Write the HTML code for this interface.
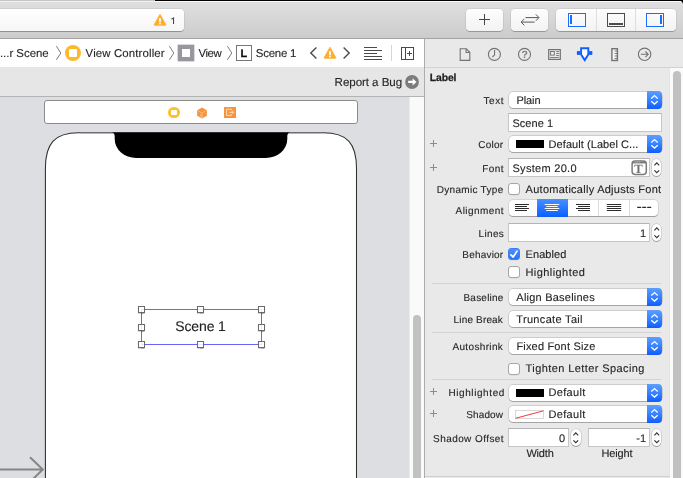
<!DOCTYPE html>
<html>
<head>
<meta charset="utf-8">
<title>Xcode</title>
<style>
html,body{margin:0;padding:0;}
body{width:683px;height:478px;overflow:hidden;background:#ececec;font-family:"Liberation Sans",sans-serif;color:#262626;-webkit-text-stroke:0.12px;text-rendering:geometricPrecision;}
#root{position:relative;width:683px;height:478px;overflow:hidden;background:#ececec;will-change:transform;}
.abs{position:absolute;}
.t{position:absolute;white-space:nowrap;line-height:14px;font-size:11px;color:#262626;}
.lbl{position:absolute;white-space:nowrap;line-height:14px;font-size:10px;color:#262626;text-align:right;right:179.5px;}
/* toolbar */
#toolbar{left:0;top:0;width:683px;height:38px;background:linear-gradient(#e0e0e0,#cccccc);}
#tbline{left:0;top:38px;width:683px;height:1px;background:#a4a4a4;}
.tbtn{position:absolute;top:9px;height:22px;background:linear-gradient(#fdfdfd,#f3f3f3);border-radius:4px;box-shadow:0 0 0 0.5px rgba(0,0,0,0.12),0 1px 0.5px rgba(0,0,0,0.22);}
/* popups */
.pop{position:absolute;left:508.7px;width:153px;height:16px;border-radius:4px;background:#fff;box-shadow:0 0 0 0.5px rgba(0,0,0,0.24),0 0.8px 0.6px rgba(0,0,0,0.26);}
.pop .cap{position:absolute;right:-0.5px;top:-0.9px;width:15px;height:17.6px;border-radius:0 4px 4px 0;background:linear-gradient(#5c9dff,#3b86ff 45%,#0f5dff);}
.pop .cap svg{position:absolute;left:0;top:0;}
.pop .tx{position:absolute;left:7.8px;top:0.8px;font-size:11px;line-height:14px;white-space:nowrap;color:#262626;}
/*vshift*/.t,.lbl,.pop .tx{margin-top:0.6px;}
.fld{position:absolute;background:#fff;border:1px solid #c6c6c6;border-top-color:#b4b4b4;box-sizing:border-box;}
.stp{position:absolute;width:9.6px;background:#fff;border-radius:5.5px;box-shadow:0 0 0 0.5px rgba(0,0,0,0.2),0 1px 0.5px rgba(0,0,0,0.25);}
.cb{position:absolute;left:508px;width:12px;height:12px;box-sizing:border-box;border:1px solid #a6a6a6;border-radius:3px;background:#fff;box-shadow:0 0.5px 0.5px rgba(0,0,0,0.08);}
.sep{position:absolute;left:432px;width:229px;height:1px;background:#d4d4d4;}
.plus{position:absolute;left:430px;width:7px;height:7px;}
.plus:before{content:"";position:absolute;left:0;top:3px;width:7px;height:1px;background:#8c8c8c;}
.plus:after{content:"";position:absolute;left:3px;top:0;width:1px;height:7px;background:#8c8c8c;}
</style>
<style id="fit">
#x1{letter-spacing:-0.002px;margin-left:-1.10px}
#x2{letter-spacing:0.141px;margin-left:0.10px}
#x3{letter-spacing:-0.452px;margin-left:0.10px}
#x5{letter-spacing:-0.210px;margin-left:-0.70px}
#x6{letter-spacing:-0.070px;margin-left:0.10px}
#x7{letter-spacing:-0.148px;margin-left:-0.70px}
#x8{letter-spacing:-0.088px;margin-left:0.20px}
#x9{letter-spacing:0.613px;margin-right:-0.70px}
#x10{letter-spacing:-0.061px;margin-left:-0.08px}
#x11{letter-spacing:0.059px;margin-left:-0.10px}
#x12{letter-spacing:0.258px;margin-right:0.10px}
#x13{letter-spacing:0.061px;margin-left:0.12px}
#x14{letter-spacing:0.456px;margin-right:-0.54px}
#x15{letter-spacing:0.288px;margin-left:0.00px}
#x16{letter-spacing:0.301px;margin-right:0.00px}
#x17{letter-spacing:0.262px;margin-left:0.10px}
#x18{letter-spacing:0.439px;margin-right:-0.52px}
#x19{letter-spacing:0.348px;margin-right:-0.66px}
#x21{letter-spacing:0.195px;margin-right:0.17px}
#x22{letter-spacing:0.058px;margin-left:0.10px}
#x23{letter-spacing:0.428px;margin-left:0.00px}
#x24{letter-spacing:0.215px;margin-right:-0.08px}
#x25{letter-spacing:0.228px;margin-left:-0.18px}
#x26{letter-spacing:0.155px;margin-right:0.54px}
#x27{letter-spacing:0.323px;margin-left:-0.18px}
#x28{letter-spacing:0.350px;margin-right:0.33px}
#x29{letter-spacing:0.178px;margin-left:-0.08px}
#x30{letter-spacing:0.407px;margin-left:0.10px}
#x31{letter-spacing:0.593px;margin-right:-1.46px}
#x32{letter-spacing:0.301px;margin-left:0.12px}
#x33{letter-spacing:0.137px;margin-right:0.33px}
#x34{letter-spacing:0.301px;margin-left:0.12px}
#x35{letter-spacing:0.422px;margin-right:-0.51px}
#x38{letter-spacing:-0.175px;margin-left:0.02px}
#x39{letter-spacing:-0.128px;margin-left:0.02px}
</style>
<style id="vfix">
#x8{margin-top:1.1px !important}
#x10{margin-top:1.1px !important}
#x15{margin-top:1.1px !important}
#x20{margin-top:1.1px !important}
#x24{margin-top:1.1px !important}
#x25{margin-top:1.1px !important}
#x26{margin-top:1.1px !important}
#x33{margin-top:1.1px !important}
#x34{margin-top:1.1px !important}
#x36{margin-top:1.1px !important}
#x37{margin-top:1.1px !important}
#x7{margin-top:-1.0px !important}
</style>
</head>
<body>
<div id="root">

<!-- ================= TOOLBAR ================= -->
<div id="toolbar" class="abs"></div>
<div class="abs" style="left:0;top:0;width:155px;height:1px;background:#c7c7c7;"></div><div class="abs" style="left:0;top:1px;width:155px;height:1px;background:#f2f2f2;"></div>
<div class="abs" style="left:155px;top:0;width:528px;height:1px;background:#000;"></div>
<div class="abs" style="left:155px;top:1px;width:528px;height:1px;background:#fbfbfb;"></div>
<div id="tbline" class="abs"></div>

<!-- activity field -->
<div class="abs" style="left:-10px;top:9px;width:194px;height:22px;border-radius:4px;background:linear-gradient(#ffffff,#f6f6f6);box-shadow:0 0 0 0.5px rgba(0,0,0,0.12),0 1px 0.5px rgba(0,0,0,0.25);"></div>
<svg class="abs" style="left:153px;top:13px;" width="14" height="13" viewBox="0 0 14 13"><path d="M7 1.2 L12.8 11.6 Q13 12.3 12.3 12.3 L1.7 12.3 Q1 12.3 1.2 11.6 Z" fill="#fdae2c" stroke="#fdae2c" stroke-width="0.8" stroke-linejoin="round"/><rect x="6.1" y="4.9" width="1.8" height="4.3" rx="0.7" fill="#fff"/><circle cx="7" cy="10.5" r="0.95" fill="#fff"/></svg>
<svg class="abs" style="left:169px;top:15px;" width="8" height="11" viewBox="0 0 8 11"><path d="M2.5 4.2 L4.55 2.9 V9" fill="none" stroke="#474747" stroke-width="1.05" stroke-linejoin="miter"/></svg>

<!-- toolbar buttons -->
<div class="tbtn" style="left:466px;width:37px;"></div>
<div class="abs" style="left:479px;top:19px;width:11px;height:1px;background:#464646;"></div>
<div class="abs" style="left:484px;top:14px;width:1px;height:11px;background:#464646;"></div>
<div class="tbtn" style="left:511px;width:37px;"></div>
<svg class="abs" style="left:519px;top:12px;" width="22" height="15" viewBox="0 0 22 15"><g fill="none" stroke="#585858" stroke-width="1" stroke-linecap="butt" stroke-linejoin="miter"><path d="M6.5 5.6 H19.6 M16.8 2.4 L20 5.6 L16.8 8.8"/><path d="M15.6 10.1 H2.5 M5.3 6.9 L2.1 10.1 L5.3 13.3"/></g></svg>
<div class="tbtn" style="left:556px;width:120px;"></div>
<div class="abs" style="left:596px;top:9px;width:1px;height:22px;background:#dedede;"></div>
<div class="abs" style="left:635px;top:9px;width:1px;height:22px;background:#dedede;"></div>
<div class="abs" style="left:568px;top:13px;width:18px;height:13.5px;box-sizing:border-box;border:1px solid #1a6dff;"></div>
<div class="abs" style="left:570.2px;top:15.2px;width:1.6px;height:9.2px;background:#1a6dff;"></div>
<div class="abs" style="left:607px;top:13px;width:18px;height:13.5px;box-sizing:border-box;border:1px solid #4c4c4c;"></div>
<div class="abs" style="left:609px;top:23px;width:14px;height:1.6px;background:#4c4c4c;"></div>
<div class="abs" style="left:646px;top:13px;width:18px;height:13.5px;box-sizing:border-box;border:1px solid #1a6dff;"></div>
<div class="abs" style="left:660.2px;top:15.2px;width:1.6px;height:9.2px;background:#1a6dff;"></div>
<!-- window corner -->
<svg class="abs" style="left:678px;top:0;" width="5" height="5" viewBox="0 0 5 5"><path d="M0 0 H5 V4.2 A4 4 0 0 0 1.2 0.7 H0 Z" fill="#000"/></svg>

<!-- ================= JUMP BAR ================= -->
<div class="abs" style="left:0;top:39px;width:424px;height:28px;background:#fff;"></div>
<div class="abs" style="left:0;top:67px;width:424px;height:29px;background:#e6e6e6;"></div>
<div class="abs" style="left:0;top:96px;width:424px;height:1px;background:#b3b3b3;"></div>

<div id="x1" class="t" style="left:1px;top:46px;font-size:11.4px;">...r Scene</div>
<svg class="abs" style="left:55px;top:45px;" width="8" height="16" viewBox="0 0 8 16"><path d="M1.4 1.2 L5.8 8 L1.4 14.8" fill="none" stroke="#7e7e7e" stroke-width="1"/></svg>
<div class="abs" style="left:65px;top:45px;width:16px;height:16px;border-radius:8px;background:#fdb92c;"></div>
<div class="abs" style="left:68.9px;top:48.9px;width:8.2px;height:8.2px;border-radius:0.9px;background:#fff;"></div>
<div id="x2" class="t" style="left:85.5px;top:46px;font-size:11.4px;">View Controller</div>
<svg class="abs" style="left:168px;top:45px;" width="8" height="16" viewBox="0 0 8 16"><path d="M1.4 1.2 L5.8 8 L1.4 14.8" fill="none" stroke="#7e7e7e" stroke-width="1"/></svg>
<div class="abs" style="left:178.1px;top:45.2px;width:15.8px;height:15.6px;background:#98979d;box-shadow:0 0 0 0.3px #85848b;"></div><div class="abs" style="left:181.6px;top:48.8px;width:8.8px;height:8.3px;background:#fff;"></div>
<div id="x3" class="t" style="left:198.5px;top:46px;font-size:11.4px;">View</div>
<svg class="abs" style="left:226px;top:45px;" width="8" height="16" viewBox="0 0 8 16"><path d="M1.4 1.2 L5.8 8 L1.4 14.8" fill="none" stroke="#7e7e7e" stroke-width="1"/></svg>
<div class="abs" style="left:236px;top:45px;width:16px;height:16px;box-sizing:border-box;background:#fff;border:1px solid #777;"></div>
<div id="x4" class="t" style="left:240.6px;top:46px;font-size:11px;font-weight:bold;color:#111;-webkit-text-stroke:0.3px;">L</div>
<div id="x5" class="t" style="left:256.5px;top:46px;font-size:11.4px;">Scene 1</div>
<svg class="abs" style="left:309px;top:46px;" width="9" height="14" viewBox="0 0 9 14"><path d="M7.4 1.5 L1.8 7 L7.4 12.5" fill="none" stroke="#4a4a4a" stroke-width="1.4"/></svg>
<svg class="abs" style="left:323px;top:46px;" width="14" height="13" viewBox="0 0 14 13"><path d="M7 1.2 L12.8 11.6 Q13 12.3 12.3 12.3 L1.7 12.3 Q1 12.3 1.2 11.6 Z" fill="#fdae2c" stroke="#fdae2c" stroke-width="0.8" stroke-linejoin="round"/><rect x="6.1" y="4.9" width="1.8" height="4.3" rx="0.7" fill="#fff"/><circle cx="7" cy="10.5" r="0.95" fill="#fff"/></svg>
<svg class="abs" style="left:342px;top:46px;" width="9" height="14" viewBox="0 0 9 14"><path d="M1.6 1.5 L7.2 7 L1.6 12.5" fill="none" stroke="#4a4a4a" stroke-width="1.4"/></svg>
<!-- lines icon -->
<div class="abs" style="left:364px;top:47px;width:13px;height:1px;background:#4a4a4a;"></div>
<div class="abs" style="left:364px;top:50px;width:18px;height:1px;background:#4a4a4a;"></div>
<div class="abs" style="left:364px;top:53px;width:13px;height:1px;background:#4a4a4a;"></div>
<div class="abs" style="left:364px;top:56px;width:18px;height:1px;background:#4a4a4a;"></div>
<div class="abs" style="left:364px;top:59px;width:18px;height:1px;background:#4a4a4a;"></div>
<div class="abs" style="left:391px;top:45px;width:1px;height:16px;background:#d6d6d6;"></div>
<!-- add editor icon -->
<div class="abs" style="left:401px;top:47px;width:13px;height:12.5px;box-sizing:border-box;border:1px solid #4a4a4a;"></div>
<div class="abs" style="left:405px;top:47px;width:1px;height:12.5px;background:#4a4a4a;"></div>
<div class="abs" style="left:407px;top:53px;width:5px;height:1px;background:#4a4a4a;"></div>
<div class="abs" style="left:409px;top:51px;width:1px;height:5px;background:#4a4a4a;"></div>

<!-- Report a bug -->
<div id="x6" class="t" style="left:334.5px;top:75px;font-size:11.6px;">Report a Bug</div>
<svg class="abs" style="left:404px;top:74px;" width="16" height="16" viewBox="404 74 16 16"><circle cx="412" cy="82" r="6.9" fill="#7c7c7c"/><path d="M408.2 80.7 H412.6 V78.2 L416.5 81.9 L412.6 85.6 V83.1 H408.2 Z" fill="#fff"/></svg>

<!-- ================= CANVAS ================= -->
<div class="abs" style="left:0;top:97px;width:409px;height:381px;background:#dddee1;"></div>
<div class="abs" style="left:409px;top:97px;width:15px;height:381px;background:#fafafa;border-left:1px solid #ebebec;box-sizing:border-box;"></div>
<div class="abs" style="left:413px;top:315px;width:8px;height:200px;border-radius:4px;background:#c1c1c1;"></div>
<div class="abs" style="left:424px;top:39px;width:1px;height:439px;background:#adadad;"></div>

<!-- scene dock -->
<div class="abs" style="left:44px;top:100px;width:314px;height:24px;box-sizing:border-box;border:1px solid #8b8b8b;border-radius:3px;background:#fff;"></div>
<div class="abs" style="left:168.1px;top:106.9px;width:12px;height:11.6px;border-radius:6px;background:#fdc12f;"></div>
<div class="abs" style="left:170.8px;top:110.3px;width:6.5px;height:4.9px;border-radius:1px;background:#fff;"></div>
<svg class="abs" style="left:196px;top:107px;" width="12" height="12" viewBox="0 0 12 12"><path d="M6 0.6 L10.9 3.3 V8.7 L6 11.4 L1.1 8.7 V3.3 Z" fill="#f6953f"/><path d="M1.6 3.6 L6 6 L10.4 3.6 M6 6 V11" fill="none" stroke="#fbc394" stroke-width="0.7"/><text x="3.9" y="9.4" font-family="Liberation Sans" font-size="3.6" fill="#fde0c6" transform="skewY(28) translate(0,-2.2)">1</text></svg>
<div class="abs" style="left:223.9px;top:107.2px;width:11.9px;height:10.7px;background:#f6953f;"></div>
<svg class="abs" style="left:224px;top:107.2px;" width="12" height="11" viewBox="0 0 12 11"><path d="M7.4 3.4 V2.2 H2.6 V8.4 H7.4 V7.2" fill="none" stroke="#fde3cb" stroke-width="0.9"/><path d="M5 5.3 H9.6 M8.2 3.9 L9.7 5.3 L8.2 6.7" fill="none" stroke="#fde3cb" stroke-width="0.9"/></svg>

<!-- device -->
<svg class="abs" style="left:0;top:120px;" width="410" height="358" viewBox="0 120 410 358">
<path d="M45.4 490 V168.4 C45.4 143.6 54.3 132.8 78.9 132.8 H323 C347.6 132.8 356.5 143.6 356.5 168.4 V490 Z" fill="#fff" stroke="#2e2e2e" stroke-width="1.05"/>
<path d="M111.8 132.5 Q114.7 132.8 114.7 136.5 V139 A21.5 19 0 0 0 136.2 158 H265.8 A21.5 19 0 0 0 287.3 139 V136.5 Q287.3 132.8 290.2 132.5 Z" fill="#000"/>
<path d="M80 132.8 H112 M290 132.8 H322" stroke="#777" stroke-width="1.05"/>
</svg>
<!-- label selection -->
<div class="abs" style="left:141px;top:308.6px;width:120.6px;height:36.2px;box-sizing:border-box;border:1.25px solid #6666fb;"></div>
<div id="x7" class="t" style="left:176px;top:317px;font-size:14px;line-height:20px;color:#222;">Scene 1</div>
<!-- handles injected below -->
<div class="abs h" style="left:138.2px;top:306px;"></div>
<div class="abs h" style="left:197.3px;top:306px;"></div>
<div class="abs h" style="left:257.7px;top:306px;"></div>
<div class="abs h" style="left:138.2px;top:323.7px;"></div>
<div class="abs h" style="left:257.7px;top:323.7px;"></div>
<div class="abs h" style="left:138.2px;top:341px;"></div>
<div class="abs h" style="left:197.3px;top:341px;"></div>
<div class="abs h" style="left:257.7px;top:341px;"></div>
<style>.h{width:7px;height:7px;box-sizing:border-box;border:1px solid #6a6a6a;background:rgba(255,255,255,0.85);box-shadow:0 0.5px 1px rgba(0,0,0,0.3);}</style>

<!-- entry arrow -->
<svg class="abs" style="left:0;top:450px;" width="50" height="28" viewBox="0 0 50 28"><path d="M-2 19.5 H42.5 M30 7.2 L42.8 19.5 L33 29" fill="none" stroke="#868686" stroke-width="2"/></svg>

<!-- ================= INSPECTOR ================= -->
<div class="abs" style="left:425px;top:39px;width:258px;height:439px;background:#e9e9e9;"></div>
<div class="abs" style="left:425px;top:67px;width:258px;height:1px;background:#d2d2d2;"></div>
<div class="abs" style="left:669px;top:68px;width:14px;height:410px;background:#fafafa;border-left:1px solid #e4e4e4;box-sizing:border-box;"></div>
<div class="abs" style="left:673px;top:71px;width:8px;height:440px;border-radius:4px;background:#c1c1c1;"></div>
<div class="abs" style="left:425px;top:476px;width:245px;height:1px;background:#cfcfcf;"></div>

<!--INSP-START-->
<!-- inspector tab icons -->
<svg class="abs" style="left:456px;top:44px;" width="200" height="22" viewBox="0 0 200 22">
 <g fill="none" stroke="#737373" stroke-width="1.1">
  <!-- file -->
  <path d="M4.2 4.8 H10.3 L13.8 8.3 V16.4 H4.2 Z"/><path d="M10.1 4.8 V8.5 H13.8"/>
  <!-- clock -->
  <circle cx="38.4" cy="10.4" r="6"/><path d="M38.6 6 V10.8 L36.4 13"/>
  <!-- help -->
  <circle cx="68.5" cy="10.4" r="6"/>
  <!-- id card -->
  <rect x="92.7" y="5.6" width="11.6" height="9.8" stroke-width="1.2"/>
  <rect x="94.6" y="7.5" width="3.7" height="3.6" stroke-width="1" fill="#f4f4f4"/>
  <path d="M100.2 7.5 H102.9 M100.2 9.5 H102.9 M100.2 11.5 H102.9 M94.1 13.5 H102.9" stroke-width="0.9"/>
  <!-- ruler -->
  <rect x="155.9" y="4.7" width="5.5" height="11.8" stroke-width="1.4" fill="#f6f6f6"/>
  <path d="M158.6 7 H161.4 M158.6 9.5 H161.4 M158.6 12 H161.4 M158.6 14.5 H161.4" stroke-width="0.95"/>
  <!-- arrow circle -->
  <circle cx="188.6" cy="10.3" r="6.2"/><path d="M184.8 10.3 H192 M189.4 7.5 L192.2 10.3 L189.4 13.1"/>
 </g>
 <text x="65.45" y="14.2" font-family="Liberation Sans" font-size="10.5" font-weight="bold" fill="#7a7a7a">?</text>
 <!-- attributes -->
 <path d="M125.1 4.2 H132.3 V10.4 L128.7 16.1 L125.1 10.4 Z" fill="#fff" stroke="#0f5fff" stroke-width="1.9" stroke-linejoin="miter"/>
 <rect x="120.9" y="7.1" width="3.4" height="3.8" fill="#0f5fff"/><rect x="133.1" y="7.1" width="3.2" height="3.8" fill="#0f5fff"/>
</svg>

<div id="x8" class="t" style="left:429.5px;top:70.8px;font-weight:bold;font-size:10.4px;color:#1e1e1e;-webkit-text-stroke:0.25px;">Label</div>

<!-- Text -->
<div id="x9" class="lbl" style="top:93.95px;">Text</div>
<div class="pop" style="top:92.1px;"><span id="x10" class="tx">Plain</span><span class="cap"><svg width="15" height="17" viewBox="0 0 15 17"><path d="M4.3 7.5 L7.5 4.6 L10.7 7.5 M4.3 10.2 L7.5 13.1 L10.7 10.2" fill="none" stroke="#fff" stroke-width="1.3"/></svg></span></div>
<div class="fld" style="left:508px;top:113px;width:154px;height:19px;"></div>
<div id="x11" class="t" style="left:512.5px;top:116px;">Scene 1</div>

<!-- Color -->
<div class="plus" style="top:140px;"></div>
<div id="x12" class="lbl" style="top:137.95px;">Color</div>
<div class="pop" style="top:136.2px;"><span class="abs" style="left:7.3px;top:3.9px;width:28px;height:7.7px;background:#000;"></span><span id="x13" class="tx" style="left:39.8px;">Default (Label C...</span><span class="cap"><svg width="15" height="17" viewBox="0 0 15 17"><path d="M4.3 7.5 L7.5 4.6 L10.7 7.5 M4.3 10.2 L7.5 13.1 L10.7 10.2" fill="none" stroke="#fff" stroke-width="1.3"/></svg></span></div>

<!-- Font -->
<div class="plus" style="top:164px;"></div>
<div id="x14" class="lbl" style="top:161.95px;">Font</div>
<div class="fld" style="left:508px;top:158px;width:142px;height:18.5px;"></div>
<div id="x15" class="t" style="left:512.5px;top:160.5px;">System 20.0</div>
<svg class="abs" style="left:630px;top:159px;" width="18" height="17" viewBox="0 0 18 17"><rect x="2.1" y="2" width="14.2" height="13.4" rx="2.8" fill="#fff" stroke="#7a7a7a" stroke-width="1.5"/><path d="M2.4 3.5 H16" stroke="#7a7a7a" stroke-width="1.9"/><path d="M4.6 3.1 h1 M6.6 3.1 h1 M8.6 3.1 h1" stroke="#e8e8e8" stroke-width="0.7"/><text x="4.3" y="14" font-family="Liberation Serif" font-weight="bold" font-size="12.6" fill="#6f6f6f">T</text></svg>
<div class="stp" style="left:651.8px;top:158.5px;height:17.5px;"><svg class="abs" style="left:0;top:0" width="9.6" height="17.5" viewBox="0 0 9.6 17.5"><path d="M2.4 6.3 L4.8 3.9 L7.2 6.3 M2.4 11.3 L4.8 13.7 L7.2 11.3" fill="none" stroke="#333" stroke-width="1.15"/></svg></div>

<!-- Dynamic Type -->
<div id="x16" class="lbl" style="top:182.95px;">Dynamic Type</div>
<div class="cb" style="top:183px;"></div>
<div id="x17" class="t" style="left:525.5px;top:182px;">Automatically Adjusts Font</div>

<!-- Alignment -->
<div id="x18" class="lbl" style="top:203.95px;">Alignment</div>
<div class="abs" style="left:508.7px;top:199.8px;width:149.4px;height:16.4px;border-radius:4px;background:#fff;box-shadow:0 0 0 0.5px rgba(0,0,0,0.18),0 1px 0.5px rgba(0,0,0,0.25);"></div>
<div class="abs" style="left:537px;top:199.3px;width:31px;height:17.4px;background:linear-gradient(#4690ff,#0b5fff);"></div>
<div class="abs" style="left:598.3px;top:199.8px;width:1px;height:16.4px;background:#dcdcdc;"></div>
<div class="abs" style="left:629.2px;top:199.8px;width:1px;height:16.4px;background:#dcdcdc;"></div>
<svg class="abs" style="left:508px;top:198.9px;" width="152" height="18" viewBox="0 0 152 18">
 <g stroke="#2b2b2b" stroke-width="1">
  <path d="M7 5.5 H21 M7 7.5 H19 M7 9.5 H21 M7 11.5 H19"/>
  <path d="M68 5.5 H82 M70 7.5 H82 M68 9.5 H82 M70 11.5 H82"/>
  <path d="M98.8 5.5 H113.2 M98.8 7.5 H113.2 M98.8 9.5 H113.2 M98.8 11.5 H113.2"/>
  <path d="M129.2 8.4 H133.2 M134.2 8.4 H138.2 M139.2 8.4 H143.2" stroke-width="1.1"/>
 </g>
 <g stroke="#fff" stroke-width="1"><path d="M36.7 5.5 H51.3 M38.2 7.5 H49.8 M36.7 9.5 H51.3 M38.2 11.5 H49.8"/></g>
</svg>

<!-- Lines -->
<div id="x19" class="lbl" style="top:227.1px;">Lines</div>
<div class="fld" style="left:508px;top:223px;width:142px;height:18.5px;"></div>
<div id="x20" class="t" style="left:600px;width:46px;text-align:right;top:225.7px;">1</div>
<div class="stp" style="left:651.8px;top:223.8px;height:17.5px;"><svg class="abs" style="left:0;top:0" width="9.6" height="17.5" viewBox="0 0 9.6 17.5"><path d="M2.4 6.3 L4.8 3.9 L7.2 6.3 M2.4 11.3 L4.8 13.7 L7.2 11.3" fill="none" stroke="#333" stroke-width="1.15"/></svg></div>

<!-- Behavior -->
<div id="x21" class="lbl" style="top:247.95px;">Behavior</div>
<div class="cb" style="top:248px;background:linear-gradient(#4a90ff,#2a76f2);border-color:#3a80f3;"><svg class="abs" style="left:-1px;top:-1px" width="12" height="12" viewBox="0 0 12 12"><path d="M2.9 6.9 L5.2 9 L9 3.1" fill="none" stroke="#fff" stroke-width="1.7" stroke-linecap="round" stroke-linejoin="round"/></svg></div>
<div id="x22" class="t" style="left:525.5px;top:247px;">Enabled</div>
<div class="cb" style="top:266px;"></div>
<div id="x23" class="t" style="left:525.5px;top:265px;">Highlighted</div>
<div class="sep" style="top:283px;"></div>

<!-- Baseline -->
<div id="x24" class="lbl" style="top:290.75px;">Baseline</div>
<div class="pop" style="top:289px;"><span id="x25" class="tx">Align Baselines</span><span class="cap"><svg width="15" height="17" viewBox="0 0 15 17"><path d="M4.3 7.5 L7.5 4.6 L10.7 7.5 M4.3 10.2 L7.5 13.1 L10.7 10.2" fill="none" stroke="#fff" stroke-width="1.3"/></svg></span></div>
<div id="x26" class="lbl" style="top:312.75px;">Line Break</div>
<div class="pop" style="top:311.3px;"><span id="x27" class="tx">Truncate Tail</span><span class="cap"><svg width="15" height="17" viewBox="0 0 15 17"><path d="M4.3 7.5 L7.5 4.6 L10.7 7.5 M4.3 10.2 L7.5 13.1 L10.7 10.2" fill="none" stroke="#fff" stroke-width="1.3"/></svg></span></div>
<div class="sep" style="top:332px;"></div>
<div id="x28" class="lbl" style="top:339.95px;">Autoshrink</div>
<div class="pop" style="top:338.2px;"><span id="x29" class="tx">Fixed Font Size</span><span class="cap"><svg width="15" height="17" viewBox="0 0 15 17"><path d="M4.3 7.5 L7.5 4.6 L10.7 7.5 M4.3 10.2 L7.5 13.1 L10.7 10.2" fill="none" stroke="#fff" stroke-width="1.3"/></svg></span></div>
<div class="cb" style="top:362.7px;"></div>
<div id="x30" class="t" style="left:525.5px;top:361px;">Tighten Letter Spacing</div>
<div class="sep" style="top:379px;"></div>

<!-- Highlighted color -->
<div class="plus" style="top:388px;"></div>
<div id="x31" class="lbl" style="top:386.05px;">Highlighted</div>
<div class="pop" style="top:385px;"><span class="abs" style="left:7.3px;top:3.9px;width:28px;height:7.7px;background:#000;"></span><span id="x32" class="tx" style="left:39.8px;top:0.1px;">Default</span><span class="cap"><svg width="15" height="17" viewBox="0 0 15 17"><path d="M4.3 7.5 L7.5 4.6 L10.7 7.5 M4.3 10.2 L7.5 13.1 L10.7 10.2" fill="none" stroke="#fff" stroke-width="1.3"/></svg></span></div>
<div class="plus" style="top:410px;"></div>
<div id="x33" class="lbl" style="top:407.75px;">Shadow</div>
<div class="pop" style="top:406.1px;"><svg class="abs" style="left:6.8px;top:3.5px;" width="29" height="9" viewBox="0 0 29 9"><rect x="0.5" y="0.5" width="28" height="8" fill="#fff" stroke="#d0d0d0" stroke-width="0.8"/><path d="M0.5 8.3 L28.5 0.8" stroke="#f23b3b" stroke-width="1"/></svg><span id="x34" class="tx" style="left:39.8px;">Default</span><span class="cap"><svg width="15" height="17" viewBox="0 0 15 17"><path d="M4.3 7.5 L7.5 4.6 L10.7 7.5 M4.3 10.2 L7.5 13.1 L10.7 10.2" fill="none" stroke="#fff" stroke-width="1.3"/></svg></span></div>

<!-- Shadow Offset -->
<div id="x35" class="lbl" style="top:431.95px;">Shadow Offset</div>
<div class="fld" style="left:508px;top:428px;width:61px;height:18.5px;"></div>
<div id="x36" class="t" style="left:520px;width:45px;text-align:right;top:430.7px;">0</div>
<div class="stp" style="left:571.2px;top:428.8px;height:17.5px;"><svg class="abs" style="left:0;top:0" width="9.6" height="17.5" viewBox="0 0 9.6 17.5"><path d="M2.4 6.3 L4.8 3.9 L7.2 6.3 M2.4 11.3 L4.8 13.7 L7.2 11.3" fill="none" stroke="#333" stroke-width="1.15"/></svg></div>
<div class="fld" style="left:587.5px;top:428px;width:62.5px;height:18.5px;"></div>
<div id="x37" class="t" style="left:600px;width:46px;text-align:right;top:430.7px;">-1</div>
<div class="stp" style="left:651.8px;top:428.8px;height:17.5px;"><svg class="abs" style="left:0;top:0" width="9.6" height="17.5" viewBox="0 0 9.6 17.5"><path d="M2.4 6.3 L4.8 3.9 L7.2 6.3 M2.4 11.3 L4.8 13.7 L7.2 11.3" fill="none" stroke="#333" stroke-width="1.15"/></svg></div>
<div id="x38" class="t" style="left:510px;width:60px;text-align:center;top:446px;">Width</div>
<div id="x39" class="t" style="left:587px;width:60px;text-align:center;top:446px;">Height</div>
<!--INSP-END-->

</div>
</body>
</html>
